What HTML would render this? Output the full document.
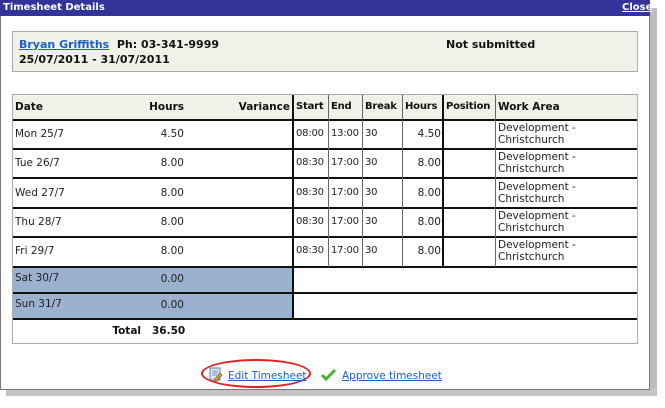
<!DOCTYPE html>
<html><head><style>
*{margin:0;padding:0;box-sizing:border-box}
body{width:665px;height:408px;background:#fff;font-family:"DejaVu Sans",Verdana,sans-serif;font-size:10.5px;color:#222;position:relative;overflow:hidden}
.a{position:absolute;white-space:nowrap}
.b{font-weight:bold;color:#111}
.r{text-align:right}
.t{font-size:10px;letter-spacing:-0.2px}
.hl{position:absolute;height:2px;background:#111}
.vl{position:absolute;width:1px;background:#666}
.vt{position:absolute;width:2px;background:#111}
a{color:#1a5fc8;text-decoration:underline}
</style></head><body>
<div class="a" style="left:649px;top:8px;width:8px;height:388px;background:#bdbdbd"></div>
<div class="a" style="left:6px;top:388px;width:651px;height:8px;background:#c4c4c4"></div>
<div class="a" style="left:0;top:0;width:650px;height:390px;background:#fff;border:1px solid #777"></div>
<div class="a" style="left:0;top:0;width:650px;height:16px;background:#333399"></div>
<div class="a b" style="left:3px;top:2px;color:#fff;font-size:10px">Timesheet Details</div>
<div class="a b" style="left:622px;top:2px;color:#fff;font-size:10px;text-decoration:underline">Close</div>
<div class="a" style="left:12px;top:31px;width:626px;height:41px;background:#f1f1ea;border:1px solid #aaa"></div>
<div class="a b" style="left:19px;top:38px;font-size:11px"><a style="color:#1a5fc8">Bryan Griffiths</a>&nbsp; Ph: 03-341-9999</div>
<div class="a b" style="left:19px;top:53px;font-size:11px">25/07/2011 - 31/07/2011</div>
<div class="a b" style="left:446px;top:38px;font-size:11px">Not submitted</div>
<div class="a" style="left:12px;top:94px;width:626px;height:250px;border:1px solid #aaa;background:#fff"></div>
<div class="a" style="left:13px;top:95px;width:624px;height:24px;background:#f1f1ea"></div>
<div class="a" style="left:13px;top:268px;width:280px;height:50px;background:#9cb0d0"></div>
<div class="hl" style="left:13px;top:119px;width:624px"></div>
<div class="hl" style="left:13px;top:148px;width:624px"></div>
<div class="hl" style="left:13px;top:177px;width:624px"></div>
<div class="hl" style="left:13px;top:207px;width:624px"></div>
<div class="hl" style="left:13px;top:236px;width:624px"></div>
<div class="hl" style="left:13px;top:266px;width:624px"></div>
<div class="hl" style="left:13px;top:292px;width:624px"></div>
<div class="hl" style="left:13px;top:318px;width:624px"></div>
<div class="vt" style="left:292px;top:95px;height:223px"></div>
<div class="vl" style="left:328px;top:95px;height:172px"></div>
<div class="vl" style="left:362px;top:95px;height:172px"></div>
<div class="vl" style="left:402px;top:95px;height:172px"></div>
<div class="vt" style="left:442px;top:95px;height:172px"></div>
<div class="vl" style="left:495px;top:95px;height:172px"></div>
<div class="a b" style="left:15px;top:101px">Date</div>
<div class="a b r" style="left:120px;top:101px;width:64px">Hours</div>
<div class="a b r" style="left:220px;top:101px;width:70px">Variance</div>
<div class="a b t" style="left:296px;top:101px">Start</div>
<div class="a b t" style="left:331px;top:101px">End</div>
<div class="a b t" style="left:365px;top:101px">Break</div>
<div class="a b t" style="left:405px;top:101px">Hours</div>
<div class="a b t" style="left:446px;top:101px">Position</div>
<div class="a b" style="left:498px;top:101px">Work Area</div>

<div class="a" style="left:15px;top:128px">Mon 25/7</div><div class="a r" style="left:120px;top:128px;width:64px">4.50</div>
<div class="a t" style="left:296px;top:128px">08:00</div><div class="a t" style="left:331px;top:128px">13:00</div><div class="a t" style="left:365px;top:128px">30</div><div class="a r" style="left:400px;top:128px;width:41px">4.50</div>
<div class="a" style="left:498px;top:122px;line-height:12px">Development -<br>Christchurch</div>

<div class="a" style="left:15px;top:157px">Tue 26/7</div><div class="a r" style="left:120px;top:157px;width:64px">8.00</div>
<div class="a t" style="left:296px;top:157px">08:30</div><div class="a t" style="left:331px;top:157px">17:00</div><div class="a t" style="left:365px;top:157px">30</div><div class="a r" style="left:400px;top:157px;width:41px">8.00</div>
<div class="a" style="left:498px;top:151px;line-height:12px">Development -<br>Christchurch</div>

<div class="a" style="left:15px;top:187px">Wed 27/7</div><div class="a r" style="left:120px;top:187px;width:64px">8.00</div>
<div class="a t" style="left:296px;top:187px">08:30</div><div class="a t" style="left:331px;top:187px">17:00</div><div class="a t" style="left:365px;top:187px">30</div><div class="a r" style="left:400px;top:187px;width:41px">8.00</div>
<div class="a" style="left:498px;top:181px;line-height:12px">Development -<br>Christchurch</div>

<div class="a" style="left:15px;top:216px">Thu 28/7</div><div class="a r" style="left:120px;top:216px;width:64px">8.00</div>
<div class="a t" style="left:296px;top:216px">08:30</div><div class="a t" style="left:331px;top:216px">17:00</div><div class="a t" style="left:365px;top:216px">30</div><div class="a r" style="left:400px;top:216px;width:41px">8.00</div>
<div class="a" style="left:498px;top:210px;line-height:12px">Development -<br>Christchurch</div>

<div class="a" style="left:15px;top:245px">Fri 29/7</div><div class="a r" style="left:120px;top:245px;width:64px">8.00</div>
<div class="a t" style="left:296px;top:245px">08:30</div><div class="a t" style="left:331px;top:245px">17:00</div><div class="a t" style="left:365px;top:245px">30</div><div class="a r" style="left:400px;top:245px;width:41px">8.00</div>
<div class="a" style="left:498px;top:239px;line-height:12px">Development -<br>Christchurch</div>

<div class="a" style="left:15px;top:272px">Sat 30/7</div><div class="a r" style="left:120px;top:273px;width:64px">0.00</div>
<div class="a" style="left:15px;top:298px">Sun 31/7</div><div class="a r" style="left:120px;top:299px;width:64px">0.00</div>
<div class="a b r" style="left:60px;top:325px;width:81px">Total</div>
<div class="a b" style="left:152px;top:325px">36.50</div>
<div class="a" style="left:201px;top:359px;width:110px;height:29px;border:2px solid #e02020;border-radius:50%"></div>
<svg class="a" style="left:209px;top:367px" width="14" height="15" viewBox="0 0 14 15"><rect x="1" y="1" width="10" height="12" fill="#dde8f5" stroke="#5a7fb0"/><path d="M3 4h6M3 6h6M3 8h5" stroke="#7a9ac0"/><path d="M5 13L11 6l2 2-6 7z" fill="#d8a040" stroke="#805020" stroke-width=".7"/></svg>
<div class="a" style="left:228px;top:370px"><a>Edit Timesheet</a></div>
<svg class="a" style="left:321px;top:368px" width="16" height="13" viewBox="0 0 16 13"><path d="M1 7l4 4 9-9" fill="none" stroke="#4caf30" stroke-width="3"/></svg>
<div class="a" style="left:342px;top:370px"><a>Approve timesheet</a></div>
</body></html>
